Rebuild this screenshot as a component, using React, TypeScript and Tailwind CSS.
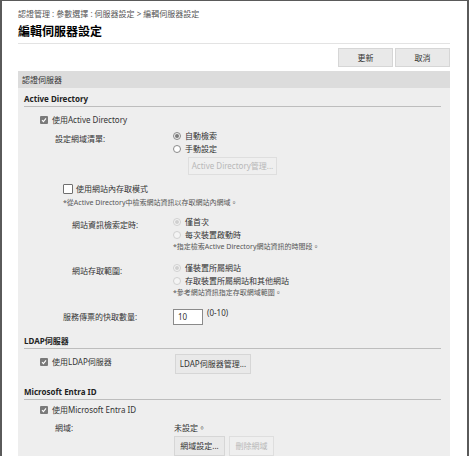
import React from "react";

const font = "font-['Noto_Sans','Noto_Sans_CJK_TC',sans-serif]";

function CheckBox({ checked }: { checked?: boolean }) {
  if (checked) {
    return (
      <span className="w-[8px] h-[8px] rounded-[1px] bg-[#7a7a7a] flex items-center justify-center shrink-0">
        <svg width="6" height="6" viewBox="0 0 6 6">
          <path d="M1 3.2 L2.4 4.6 L5 1.4" stroke="#fff" strokeWidth="1.1" fill="none" />
        </svg>
      </span>
    );
  }
  return <span className="w-[10px] h-[10px] border border-[#6f6f6f] bg-white rounded-[1px] shrink-0" />;
}

function Radio({ checked, faded }: { checked?: boolean; faded?: boolean }) {
  const ring = faded ? "border-[#d0d0d0] bg-[#f4f4f4]" : checked ? "border-[#8a8a8a] bg-[#f0f0f0]" : "border-[#8a8a8a] bg-white";
  return (
    <span className={`w-[8px] h-[8px] rounded-full border ${ring} flex items-center justify-center shrink-0`}>
      {checked && <span className={`w-[4px] h-[4px] rounded-full ${faded ? "bg-[#cfcfcf]" : "bg-[#7a7a7a]"}`} />}
    </span>
  );
}

function Btn({ children, disabled, className = "" }: { children: React.ReactNode; disabled?: boolean; className?: string }) {
  return (
    <div
      className={`flex items-center justify-center border ${
        disabled ? "border-[#dedede] bg-[#efefef] text-[#b8b8b8]" : "border-[#d6d6d6] bg-[#e9e9e9] text-[#333]"
      } ${className}`}>
      {children}
    </div>
  );
}

function SectionTitle({ children, className = "" }: { children: React.ReactNode; className?: string }) {
  return (
    <div className={`h-[19px] flex items-end pb-[1px] border-b border-[#bdbdbd] font-bold text-[#222] ${className}`}>
      {children}
    </div>
  );
}

function RadioRow({ checked, faded, children }: { checked?: boolean; faded?: boolean; children: React.ReactNode }) {
  return (
    <div className="h-[13px] flex items-center gap-[4px]">
      <Radio checked={checked} faded={faded} />
      <span>{children}</span>
    </div>
  );
}

export default function App() {
  return (
    <div
      className={`${font} w-[469px] h-[456px] overflow-hidden bg-white border-t border-x-2 border-[#5a5a5a] text-[#333] text-[8px] leading-[12px]`}>
      <div className="pl-4 pr-[17px] pt-[7px]">
        {/* breadcrumb + title */}
        <div className="text-[#555]">認證管理 : 參數選擇 : 伺服器設定 &gt; 編輯伺服器設定</div>
        <div className="mt-[4px] text-[12px] leading-[16px] font-bold text-black pb-[3px] border-b border-[#e3e3e3]">
          編輯伺服器設定
        </div>

        {/* actions */}
        <div className="mt-[4px] flex justify-end gap-[2px]">
          <Btn className="w-[55px] h-[19px]">更新</Btn>
          <Btn className="w-[55px] h-[19px]">取消</Btn>
        </div>

        <div className="mt-[4px] h-[17px] bg-[#dcdcdc] pl-[4px] flex items-center text-[#333]">認證伺服器</div>

        <div className="bg-[#eeeeee] pl-[6px] pr-[9px] pb-[20px]">
          {/* Active Directory */}
          <SectionTitle>Active Directory</SectionTitle>
          <div className="mt-[7px] pl-[16px] flex items-center gap-[4px]">
            <CheckBox checked />
            <span>使用Active Directory</span>
          </div>

          <div className="mt-[3px] flex">
            <div className="w-[149px] shrink-0 pl-[31px] pt-[3px] leading-[13px]">設定網域清單:</div>
            <div>
              <RadioRow checked>自動檢索</RadioRow>
              <RadioRow>手動設定</RadioRow>
              <Btn disabled className="mt-[2px] ml-[15px] w-[89px] h-[18px]">
                Active Directory管理...
              </Btn>
            </div>
          </div>

          <div className="mt-[8px] pl-[39px] flex items-center gap-[3px]">
            <CheckBox />
            <span>使用網站內存取模式</span>
          </div>
          <div className="mt-[2px] pl-[39px] text-[7px] text-[#555]">*從Active Directory中檢索網站資訊以存取網站內網域。</div>

          <div className="mt-[6px] flex">
            <div className="w-[149px] shrink-0 pl-[48px] pt-[3px] leading-[13px]">網站資訊檢索定時:</div>
            <div>
              <RadioRow checked faded>僅首次</RadioRow>
              <RadioRow faded>每次裝置啟動時</RadioRow>
              <div className="text-[7px] text-[#555]">*指定檢索Active Directory網站資訊的時間段。</div>
            </div>
          </div>

          <div className="mt-[8px] flex">
            <div className="w-[149px] shrink-0 pl-[48px] pt-[3px] leading-[13px]">網站存取範圍:</div>
            <div>
              <RadioRow checked faded>僅裝置所屬網站</RadioRow>
              <RadioRow faded>存取裝置所屬網站和其他網站</RadioRow>
              <div className="text-[7px] text-[#555]">*參考網站資訊指定存取網域範圍。</div>
            </div>
          </div>

          <div className="mt-[10px] flex items-center">
            <div className="w-[149px] shrink-0 pl-[39px]">服務傳票的快取數量:</div>
            <div className="w-[30px] h-[16px] border border-[#8a8a8a] bg-white pl-[4px] flex items-center">10</div>
            <span className="ml-[4px] self-start -mt-[2px]">(0-10)</span>
          </div>

          {/* LDAP */}
          <SectionTitle className="mt-[5px]">LDAP伺服器</SectionTitle>
          <div className="mt-[5px] flex items-start">
            <div className="w-[151px] shrink-0 pl-[16px] mt-[2px] flex items-center gap-[4px]">
              <CheckBox checked />
              <span>使用LDAP伺服器</span>
            </div>
            <Btn className="w-[76px] h-[20px]">LDAP伺服器管理...</Btn>
          </div>

          {/* Microsoft Entra ID */}
          <SectionTitle className="mt-[7px]">Microsoft Entra ID</SectionTitle>
          <div className="mt-[4px] pl-[16px] flex items-center gap-[4px]">
            <CheckBox checked />
            <span>使用Microsoft Entra ID</span>
          </div>
          <div className="mt-[6px] flex">
            <div className="w-[150px] shrink-0 pl-[31px]">網域:</div>
            <div>
              <div>未設定。</div>
              <div className="mt-[2px] flex gap-[4px]">
                <Btn className="w-[51px] h-[20px]">網域設定...</Btn>
                <Btn disabled className="w-[45px] h-[20px]">刪除網域</Btn>
              </div>
            </div>
          </div>
        </div>
      </div>
    </div>
  );
}
